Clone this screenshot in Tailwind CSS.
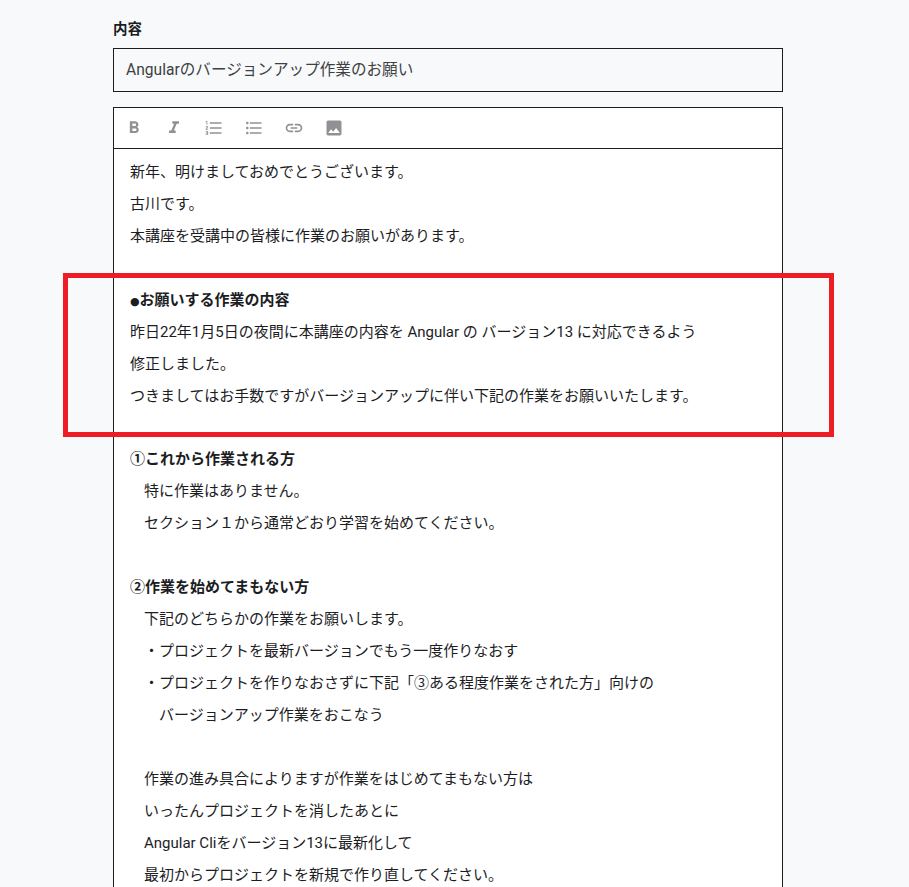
<!DOCTYPE html>
<html lang="ja">
  <head>
    <meta charset="UTF-8" />
    <title>内容</title>
    <script src="https://cdn.jsdelivr.net/npm/@tailwindcss/browser@4"></script>
  </head>
  <body class="bg-[#f7f9fa] h-[887px] overflow-hidden relative text-[#1c1d1f] text-[15px] font-['Roboto','Noto_Sans_CJK_JP',sans-serif]">
    <div class="w-[670px] ml-[113px] pt-[19px]">
      <label class="block font-bold text-[14.5px] leading-[21px] mb-[8px]">内容</label>
      <div class="h-[44px] border border-[#1c1d1f] bg-[#f7f9fa] flex items-center px-[12px] pt-[1px] text-[15.6px] text-[#3e4143]">Angularのバージョンアップ作業のお願い</div>

      <div class="mt-[15px] border border-[#1c1d1f] bg-white">
        <div class="h-[41px] border-b border-[#1c1d1f] flex items-center pl-[10px] gap-[20px] text-[#8f9194]">
          <svg class="w-[20px] h-[20px]" viewBox="0 0 24 24" fill="currentColor"><path d="M15.6 10.79c.97-.67 1.65-1.77 1.65-2.79 0-2.26-1.75-4-4-4H7v14h7.04c2.09 0 3.71-1.7 3.71-3.79 0-1.52-.86-2.82-2.15-3.42zM10 6.5h3c.83 0 1.5.67 1.5 1.5s-.67 1.5-1.5 1.5h-3v-3zm3.5 9H10v-3h3.5c.83 0 1.5.67 1.5 1.5s-.67 1.5-1.5 1.5z"/></svg>
          <svg class="w-[20px] h-[20px]" viewBox="0 0 24 24" fill="currentColor"><path d="M10 4v3h2.21l-3.42 8H6v3h8v-3h-2.21l3.42-8H18V4z"/></svg>
          <svg class="w-[20px] h-[20px]" viewBox="0 0 24 24" fill="currentColor"><path d="M2 17h2v.5H3v1h1v.5H2v1h3v-4H2v1zm1-9h1V4H2v1h1v3zm-1 3h1.8L2 13.1v.9h3v-1H3.2L5 10.9V10H2v1zm5-6v2h14V5H7zm0 14h14v-2H7v2zm0-6h14v-2H7v2z"/></svg>
          <svg class="w-[20px] h-[20px]" viewBox="0 0 24 24" fill="currentColor"><path d="M4 10.5c-.83 0-1.5.67-1.5 1.5s.67 1.5 1.5 1.5 1.5-.67 1.5-1.5-.67-1.5-1.5-1.5zm0-6c-.83 0-1.5.67-1.5 1.5S3.17 7.5 4 7.5 5.500 6.830 5.500 6 4.830 4.500 4 4.500zm0 12c-.83 0-1.5.68-1.5 1.500s.68 1.500 1.500 1.500 1.500-.68 1.500-1.500-.67-1.500-1.500-1.500zM7 19h14v-2H7v2zm0-6h14v-2H7v2zm0-8v2h14V5H7z"/></svg>
          <svg class="w-[20px] h-[20px]" viewBox="0 0 24 24" fill="currentColor"><path d="M3.9 12c0-1.71 1.39-3.1 3.1-3.1h4V7H7c-2.76 0-5 2.24-5 5s2.24 5 5 5h4v-1.9H7c-1.71 0-3.1-1.39-3.1-3.1zM8 13h8v-2H8v2zm9-6h-4v1.900h4c1.710 0 3.100 1.390 3.100 3.100s-1.390 3.100-3.100 3.100h-4V17h4c2.760 0 5-2.240 5-5s-2.240-5-5-5z"/></svg>
          <svg class="w-[20px] h-[20px]" viewBox="0 0 24 24" fill="currentColor"><path d="M21 19V5c0-1.100-.9-2-2-2H5c-1.100 0-2 .9-2 2v14c0 1.100.9 2 2 2h14c1.100 0 2-.9 2-2zM8.500 13.500l2.500 3.010L14.500 12l4.500 6H5l3.500-4.500z"/></svg>
        </div>
        <div class="px-[16px] pt-[8px] leading-[31.95px] [&>p]:h-[31.95px]">
          <p>新年、明けましておめでとうございます。</p>
          <p>古川です。</p>
          <p>本講座を受講中の皆様に作業のお願いがあります。</p>
          <p></p>
          <p class="font-bold"><span class="font-['DejaVu_Sans'] text-[11px] leading-none">●</span>お願いする作業の内容</p>
          <p>昨日22年1月5日の夜間に本講座の内容を Angular の バージョン13 に対応できるよう</p>
          <p>修正しました。</p>
          <p>つきましてはお手数ですがバージョンアップに伴い下記の作業をお願いいたします。</p>
          <p></p>
          <p class="font-bold">①これから作業される方</p>
          <p class="pl-[14px]">特に作業はありません。</p>
          <p class="pl-[14px]">セクション１から通常どおり学習を始めてください。</p>
          <p></p>
          <p class="font-bold">②作業を始めてまもない方</p>
          <p class="pl-[14px]">下記のどちらかの作業をお願いします。</p>
          <p class="pl-[14px]">・プロジェクトを最新バージョンでもう一度作りなおす</p>
          <p class="pl-[14px]">・プロジェクトを作りなおさずに下記「③ある程度作業をされた方」向けの</p>
          <p class="pl-[29px]">バージョンアップ作業をおこなう</p>
          <p></p>
          <p class="pl-[14px]">作業の進み具合によりますが作業をはじめてまもない方は</p>
          <p class="pl-[14px]">いったんプロジェクトを消したあとに</p>
          <p class="pl-[14px]">Angular Cliをバージョン13に最新化して</p>
          <p class="pl-[14px]">最初からプロジェクトを新規で作り直してください。</p>
        </div>
      </div>
    </div>
    <div class="absolute left-[63px] top-[273px] w-[771px] h-[164px] border-[5px] border-[#ee1c25]"></div>
  </body>
</html>
